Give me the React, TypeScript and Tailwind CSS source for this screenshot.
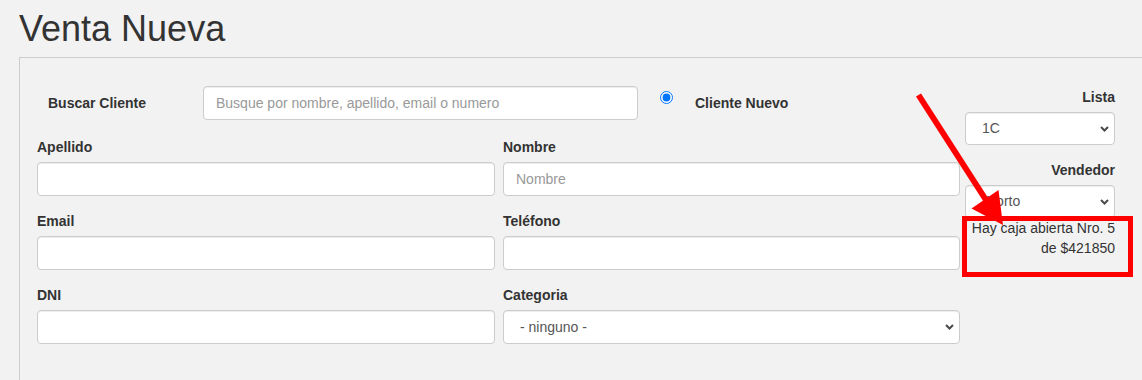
import React from "react";

const inputCls =
  "block w-full h-[34px] bg-white border border-[#ccc] rounded-[4px] px-[12px] text-[14px] text-[#555] placeholder:text-[#999] shadow-[inset_0_1px_1px_rgba(0,0,0,0.075)] outline-none";

function Chevron() {
  return (
    <svg
      className="absolute right-[6px] top-1/2 -translate-y-1/2 pointer-events-none"
      width="9"
      height="6"
      viewBox="0 0 9 6"
    >
      <polyline points="1,1 4.5,4.5 8,1" fill="none" stroke="#4a4a4a" strokeWidth="2" />
    </svg>
  );
}

function Select({ value, h = "h-[34px]", pl = "pl-[16px]" }: { value: string; h?: string; pl?: string }) {
  return (
    <div className="relative">
      <select
        defaultValue={value}
        className={`block w-full ${h} ${pl} appearance-none bg-white border border-[#ccc] rounded-[4px] pr-[20px] text-[14px] text-[#555] shadow-[inset_0_1px_1px_rgba(0,0,0,0.075)] outline-none`}
      >
        <option value={value}>{value}</option>
      </select>
      <Chevron />
    </div>
  );
}

function Field({ label, children }: { label: string; children: React.ReactNode }) {
  return (
    <div className="mb-[15px]">
      <label className="block text-[14px] leading-[20px] font-bold mb-[5px] text-[#333]">{label}</label>
      {children}
    </div>
  );
}

export default function App() {
  return (
    <div className="relative w-[1142px] h-[380px] overflow-hidden bg-[#f2f2f2] text-[#333] font-['Liberation_Sans',Arial,sans-serif]">
      <h1 className="pl-[19px] pt-[9px] text-[36px] leading-[40px] font-normal text-[#333]">Venta Nueva</h1>
      <div className="ml-[19px] mt-[8px] h-[330px] border-t border-l border-[#ccc] flex">
        <div className="pl-[17px] pt-[28px] w-[940px]">
          <div className="flex items-center h-[34px]">
            <label className="w-[166px] pl-[11px] text-[14px] font-bold leading-[20px]">Buscar Cliente</label>
            <input
              className={inputCls + " !w-[435px]"}
              placeholder="Busque por nombre, apellido, email o numero"
            />
            <input
              type="radio"
              defaultChecked
              className="self-start mt-[5px] ml-[22px] w-[13px] h-[13px] m-0"
            />
            <label className="ml-[22px] text-[14px] font-bold leading-[20px]">Cliente Nuevo</label>
          </div>
          <div className="mt-[17px] w-[923px] grid grid-cols-[458px_457px] gap-x-[8px]">
            <Field label="Apellido">
              <input className={inputCls} />
            </Field>
            <Field label="Nombre">
              <input className={inputCls} placeholder="Nombre" />
            </Field>
            <Field label="Email">
              <input className={inputCls} />
            </Field>
            <Field label="Teléfono">
              <input className={inputCls} />
            </Field>
            <Field label="DNI">
              <input className={inputCls} />
            </Field>
            <Field label="Categoria">
              <Select value="- ninguno -" />
            </Field>
          </div>
        </div>
        <div className="ml-[5px] w-[150px] pt-[29px]">
          <label className="block text-right text-[14px] leading-[20px] font-bold mb-[5px]">Lista</label>
          <Select value="1C" h="h-[33px]" />
          <label className="block mt-[15px] text-right text-[14px] leading-[20px] font-bold mb-[5px]">Vendedor</label>
          <Select value="Norto" h="h-[33px]" pl="pl-[20px]" />
          <p className="text-right text-[14px] leading-[20px] text-[#333]">
            Hay caja abierta Nro. 5
            <br />
            de $421850
          </p>
        </div>
      </div>
      <svg className="absolute left-0 top-0 pointer-events-none" width="1142" height="380" viewBox="0 0 1142 380">
        <rect x="964.5" y="218.5" width="166" height="56" fill="none" stroke="#ff0000" strokeWidth="5" />
        <line x1="918.5" y1="95" x2="986" y2="200" stroke="#ff0000" strokeWidth="6" />
        <polygon points="971.5,208.5 998.5,190 1003,225" fill="#ff0000" />
      </svg>
    </div>
  );
}
